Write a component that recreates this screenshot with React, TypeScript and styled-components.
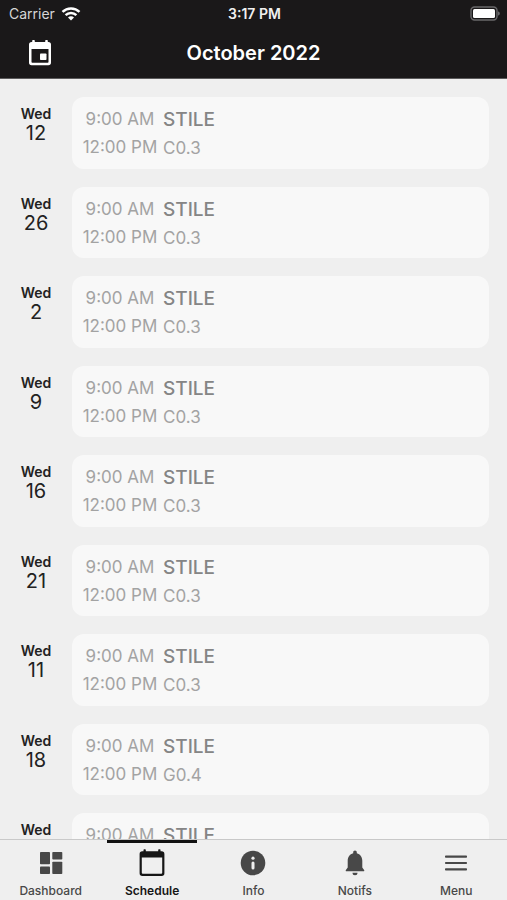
import React from "react";
import styled, { createGlobalStyle } from "styled-components";

const GlobalStyle = createGlobalStyle`
  *, *::before, *::after { box-sizing: border-box; }
  body {
    margin: 0;
    background: #efefef;
    color: #222;
    font-family: Inter, "Liberation Sans", sans-serif;
  }
  button { font: inherit; border: 0; padding: 0; background: none; cursor: pointer; }
`;

const Screen = styled.div`
  height: 100vh;
  display: flex;
  flex-direction: column;
`;

const Header = styled.header`
  flex: none;
  background: #1a1819;
  color: #fff;
  border-bottom: 1px solid #5c5b5c;
`;

const StatusBar = styled.div`
  display: grid;
  grid-template-columns: 1fr auto 1fr;
  align-items: center;
  height: 27px;
  padding: 0 7px 0 9px;
  font-size: 14px;
  line-height: 20px;
`;

const Carrier = styled.span`
  display: flex;
  align-items: center;
  gap: 6px;
  color: #d6d6d6;
`;

const Clock = styled.time`
  font-size: 14px;
  font-weight: 600;
  color: #f0f0f0;
`;

const BatterySlot = styled.span`
  display: flex;
  justify-content: flex-end;
`;

const TitleBar = styled.div`
  display: grid;
  grid-template-columns: 1fr auto 1fr;
  align-items: center;
  height: 51px;
  padding: 0 24px;
`;

const TodayButton = styled.button`
  display: flex;
  width: 32px;
  height: 32px;
  align-items: center;
  justify-content: center;
  color: #fff;
`;

const Title = styled.h1`
  margin: 0;
  font-size: 20px;
  font-weight: 600;
  line-height: 28px;
`;

const Scroller = styled.main`
  flex: 1;
  min-height: 0;
  overflow-y: auto;
  scrollbar-width: none;
  padding: 18px 18px 18px 0;
`;

const List = styled.ul`
  display: grid;
  grid-auto-rows: 1fr;
  gap: 18px;
  min-height: 788px;
  margin: 0;
  padding: 0;
  list-style: none;
`;

const Row = styled.li`
  display: grid;
  grid-template-columns: 72px 1fr;
`;

const DayLabel = styled.div`
  padding-top: 8px;
  text-align: center;
`;

const Weekday = styled.div`
  font-size: 14px;
  font-weight: 600;
  line-height: 18px;
`;

const DayNumber = styled.div`
  font-size: 20px;
  line-height: 20px;
`;

const Card = styled.article`
  display: flex;
  gap: 6px;
  padding: 0 11px;
  border-radius: 12px;
  background: #f8f8f8;
`;

const Times = styled.div`
  display: flex;
  flex-direction: column;
  align-items: center;
  width: 74px;
  padding-top: 8px;
  white-space: nowrap;
  font-size: 17px;
  line-height: 28px;
  color: #a3a3a3;
`;

const Details = styled.div`
  display: flex;
  flex-direction: column;
  padding-top: 9px;
  line-height: 28px;
`;

const Course = styled.strong`
  font-size: 19px;
  font-weight: 500;
  color: #858585;
`;

const Room = styled.span`
  font-size: 17px;
  color: #a3a3a3;
`;

const TabBar = styled.nav`
  flex: none;
  display: grid;
  grid-template-columns: repeat(5, 1fr);
  height: 60px;
  background: #efefef;
  box-shadow: 0 -1px 0 #c9c9c9;
`;

const Tab = styled.button<{ $active?: boolean }>`
  position: relative;
  display: flex;
  flex-direction: column;
  align-items: center;
  padding-top: 7px;
  gap: 4px;
  color: ${(p) => (p.$active ? "#161616" : "#484848")};
  font-size: 12px;
  font-weight: ${(p) => (p.$active ? 600 : 500)};
  line-height: 16px;

  &::before {
    content: "";
    display: ${(p) => (p.$active ? "block" : "none")};
    position: absolute;
    top: 0;
    left: 6px;
    right: 6px;
    height: 3px;
    background: #111;
  }
`;

const IconBox = styled.span`
  display: flex;
  align-items: center;
  justify-content: center;
  height: 32px;
`;

const Icon = styled.svg`
  display: block;
  fill: currentColor;
`;

const WifiIcon = () => (
  <Icon width="20" height="16" viewBox="0 0 20 16" aria-hidden="true" color="#fff">
    <path d="M10 14.6 7 11.6a4.2 4.2 0 0 1 6 0z" />
    <g fill="none" stroke="currentColor" strokeWidth="2.5">
      <path d="M4.6 9.2a7.7 7.7 0 0 1 10.8 0" />
      <path d="M1.5 5.9a12.2 12.2 0 0 1 17 0" />
    </g>
  </Icon>
);

const BatteryIcon = () => (
  <Icon width="30" height="15" viewBox="0 0 30 15" aria-hidden="true">
    <rect x="1" y="1" width="26" height="13" rx="3.5" fill="none" stroke="#69686a" strokeWidth="1.4" />
    <rect x="3" y="3" width="22" height="9" rx="1.5" fill="#fff" />
    <path d="M28 5.5c1.5.4 1.8 1.2 1.8 2s-.3 1.6-1.8 2z" fill="#69686a" />
  </Icon>
);

const TodayIcon = () => (
  <Icon width="24" height="26" viewBox="0 0 24 26" aria-hidden="true">
    <path
      fillRule="evenodd"
      d="M4.2.8a.7.7 0 0 1 .7-.7h1.2a.7.7 0 0 1 .7.7V2h10.4V.8a.7.7 0 0 1 .7-.7h1.2a.7.7 0 0 1 .7.7V2h.6a2.6 2.6 0 0 1 2.6 2.6v18a2.6 2.6 0 0 1-2.6 2.6H3.6A2.6 2.6 0 0 1 1 22.600v-18A2.600 2.600 0 0 1 3.600 2h.6zM3.500 9v13a.7.7 0 0 0 .7.7h15.600a.7.7 0 0 0 .7-.7V9z"
    />
    <rect x="12" y="13.500" width="6.500" height="6.500" rx="0.8" />
  </Icon>
);

const DashboardIcon = () => (
  <Icon width="24" height="24" viewBox="0 0 24 24" aria-hidden="true">
    <rect x="1" y="1" width="10" height="12.200" rx="0.8" />
    <rect x="13.300" y="1" width="10" height="7.500" rx="0.8" />
    <rect x="1" y="15.500" width="10" height="7.500" rx="0.8" />
    <rect x="13.300" y="10.800" width="10" height="12.200" rx="0.8" />
  </Icon>
);

const ScheduleIcon = () => (
  <Icon width="26" height="28" viewBox="0 0 26 28" aria-hidden="true">
    <path
      fillRule="evenodd"
      d="M4.500 1a.7.7 0 0 1 .7-.7h.9a.7.7 0 0 1 .7.7v1.200h12.400V1a.7.7 0 0 1 .7-.7h.9a.7.7 0 0 1 .7.7v1.200h1.200a2.700 2.700 0 0 1 2.700 2.700v19.400a2.700 2.700 0 0 1-2.700 2.700H3.300a2.700 2.700 0 0 1-2.700-2.700V4.900a2.700 2.700 0 0 1 2.700-2.700h1.200zM2.800 8.600v15.200a1 1 0 0 0 1 1h18.400a1 1 0 0 0 1-1V8.600z"
    />
  </Icon>
);

const InfoIcon = () => (
  <Icon width="26" height="26" viewBox="0 0 26 26" aria-hidden="true">
    <circle cx="13" cy="13" r="12.300" />
    <circle cx="13" cy="8.200" r="1.600" fill="#efefef" />
    <rect x="11.500" y="11.500" width="3" height="8" rx="1.500" fill="#efefef" />
  </Icon>
);

const BellIcon = () => (
  <Icon width="20" height="26" viewBox="0 0 20 26" aria-hidden="true">
    <path d="M10 .5c-1 0-1.800.8-1.800 1.800v.9C4.800 4 2.700 7 2.700 10.700v6.800L.9 19.900c-.5.600-.1 1.400.6 1.400h17c.7 0 1.100-.8.600-1.400l-1.800-2.400v-6.800c0-3.700-2.100-6.700-5.500-7.500v-.9c0-1-.8-1.800-1.800-1.800zM7.500 22.800a2.500 2.500 0 0 0 5 0z" />
  </Icon>
);

const MenuIcon = () => (
  <Icon width="24" height="24" viewBox="0 0 24 24" aria-hidden="true">
    <rect x="1" y="4.500" width="22" height="2.200" rx="0.8" />
    <rect x="1" y="10.900" width="22" height="2.200" rx="0.8" />
    <rect x="1" y="17.300" width="22" height="2.200" rx="0.8" />
  </Icon>
);

const EVENTS = [
  { day: "12", room: "C0.3" },
  { day: "26", room: "C0.3" },
  { day: "2", room: "C0.3" },
  { day: "9", room: "C0.3" },
  { day: "16", room: "C0.3" },
  { day: "21", room: "C0.3" },
  { day: "11", room: "C0.3" },
  { day: "18", room: "G0.4" },
  { day: "25", room: "C0.3" },
];

const TABS = [
  { label: "Dashboard", Glyph: DashboardIcon },
  { label: "Schedule", Glyph: ScheduleIcon, active: true },
  { label: "Info", Glyph: InfoIcon },
  { label: "Notifs", Glyph: BellIcon },
  { label: "Menu", Glyph: MenuIcon },
];

export default function App() {
  return (
    <Screen>
      <GlobalStyle />
      <Header>
        <StatusBar>
          <Carrier>
            Carrier
            <WifiIcon />
          </Carrier>
          <Clock>3:17 PM</Clock>
          <BatterySlot>
            <BatteryIcon />
          </BatterySlot>
        </StatusBar>
        <TitleBar>
          <TodayButton type="button" aria-label="Go to today">
            <TodayIcon />
          </TodayButton>
          <Title>October 2022</Title>
        </TitleBar>
      </Header>
      <Scroller>
        <List>
          {EVENTS.map(({ day, room }) => (
            <Row key={day}>
              <DayLabel>
                <Weekday>Wed</Weekday>
                <DayNumber>{day}</DayNumber>
              </DayLabel>
              <Card>
                <Times>
                  <time>9:00 AM</time>
                  <time>12:00 PM</time>
                </Times>
                <Details>
                  <Course>STILE</Course>
                  <Room>{room}</Room>
                </Details>
              </Card>
            </Row>
          ))}
        </List>
      </Scroller>
      <TabBar>
        {TABS.map(({ label, Glyph, active }) => (
          <Tab key={label} type="button" $active={active} aria-current={active ? "page" : undefined}>
            <IconBox>
              <Glyph />
            </IconBox>
            {label}
          </Tab>
        ))}
      </TabBar>
    </Screen>
  );
}
